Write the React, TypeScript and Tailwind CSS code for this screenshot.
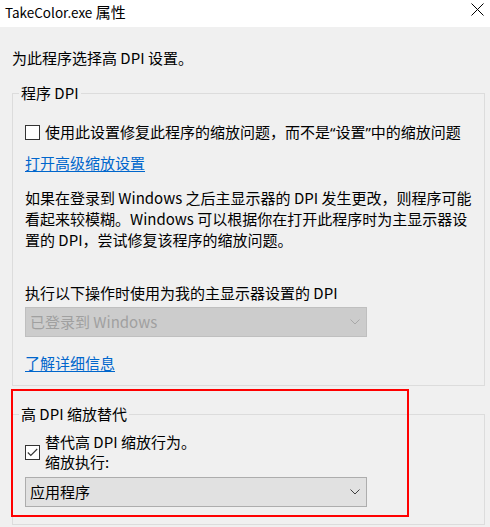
import React from 'react';

const FONT = { fontFamily: '"Noto Sans CJK SC", "Noto Sans", sans-serif' };

function Chevron({ color }: { color: string }) {
  return (
    <svg width="10" height="6" viewBox="0 0 10 6" className="shrink-0">
      <polyline points="0.5,0.5 5,5 9.5,0.5" fill="none" stroke={color} strokeWidth="1" />
    </svg>
  );
}

function Combo({ label, disabled }: { label: string; disabled?: boolean }) {
  return (
    <div
      className={
        disabled
          ? 'flex h-[30px] w-[342px] items-center justify-between border border-[#bfbfbf] bg-[#cccccc] pl-[4px] pr-[6px] text-[#a0a0a0]'
          : 'flex h-[30px] w-[342px] items-center justify-between border border-[#adadad] bg-[#e1e1e1] pl-[4px] pr-[6px] text-black'
      }
    >
      <span className="leading-[20px]">{label}</span>
      <Chevron color={disabled ? '#a8a8a8' : '#404040'} />
    </div>
  );
}

function CheckBox({ checked }: { checked?: boolean }) {
  return (
    <div className="flex h-[15px] w-[15px] shrink-0 items-center justify-center border border-[#333333] bg-white">
      {checked && (
        <svg width="11" height="9" viewBox="0 0 11 9">
          <polyline points="0.8,4.5 3.8,7.5 10.2,1" fill="none" stroke="#333333" strokeWidth="1.1" />
        </svg>
      )}
    </div>
  );
}

export default function App() {
  return (
    <div className="h-[527px] w-[490px] overflow-hidden bg-[#f0f0f0] text-[15px] text-black" style={FONT}>
      <div className="flex h-[27px] items-start justify-between bg-white pl-[5px] pr-[5px] pt-[1px]">
        <span className="leading-[21px]">
          <span className="text-[13.5px]">TakeColor.exe</span> 属性
        </span>
        <svg width="13" height="13" viewBox="0 0 13 13" className="mt-[2px] mr-[1px]">
          <path d="M0.5 0.5 L12.5 12.5 M12.5 0.5 L0.5 12.5" stroke="#000" strokeWidth="1" />
        </svg>
      </div>

      <div className="px-[12px]">
        <div className="mt-[20px] leading-[21px]">为此程序选择高 DPI 设置。</div>

        <fieldset className="mt-[15px] w-[473px] border border-[#dcdcdc] pb-[12px]">
          <legend className="ml-[6px] px-[2px] leading-[20px]">程序 DPI</legend>
          <div className="px-[12px]">
            <div className="mt-[18px] flex items-center gap-[5px] leading-[21px]">
              <CheckBox />
              <span className="whitespace-nowrap">
                使用此设置修复此程序的缩放问题，而不是<span style={{ fontFamily: '"Noto Sans", sans-serif' }}>“</span>设置<span style={{ fontFamily: '"Noto Sans", sans-serif' }}>”</span>中的缩放问题
              </span>
            </div>
            <div className="mt-[9px] leading-[21px]">
              <a className="text-[#0066cc] underline underline-offset-2">打开高级缩放设置</a>
            </div>
            <div className="mt-[14px] whitespace-nowrap leading-[21px]">
              <div>如果在登录到 Windows 之后主显示器的 DPI 发生更改，则程序可能</div>
              <div>看起来较模糊。Windows 可以根据你在打开此程序时为主显示器设</div>
              <div>置的 DPI，尝试修复该程序的缩放问题。</div>
            </div>
            <div className="mt-[32px] leading-[21px]">执行以下操作时使用为我的主显示器设置的 DPI</div>
            <div className="mt-[4px]">
              <Combo label="已登录到 Windows" disabled />
            </div>
            <div className="mt-[15px] leading-[21px]">
              <a className="text-[#0066cc] underline underline-offset-2">了解详细信息</a>
            </div>
          </div>
        </fieldset>

        <div className="relative mt-[18px]">
          <fieldset className="w-[473px] border border-[#dcdcdc] pb-[17px]">
            <legend className="ml-[6px] px-[2px] leading-[20px]">高 DPI 缩放替代</legend>
            <div className="px-[12px]">
              <div className="mt-[8px] flex items-center gap-[5px] leading-[20px]">
                <CheckBox checked />
                <div>
                  <div>替代高 DPI 缩放行为。</div>
                  <div>缩放执行:</div>
                </div>
              </div>
              <div className="mt-[5px]">
                <Combo label="应用程序" />
              </div>
            </div>
          </fieldset>
          <div className="pointer-events-none absolute left-[-1px] top-[-15px] h-[128px] w-[398px] border-2 border-[#ff0000]" />
        </div>
      </div>
    </div>
  );
}
